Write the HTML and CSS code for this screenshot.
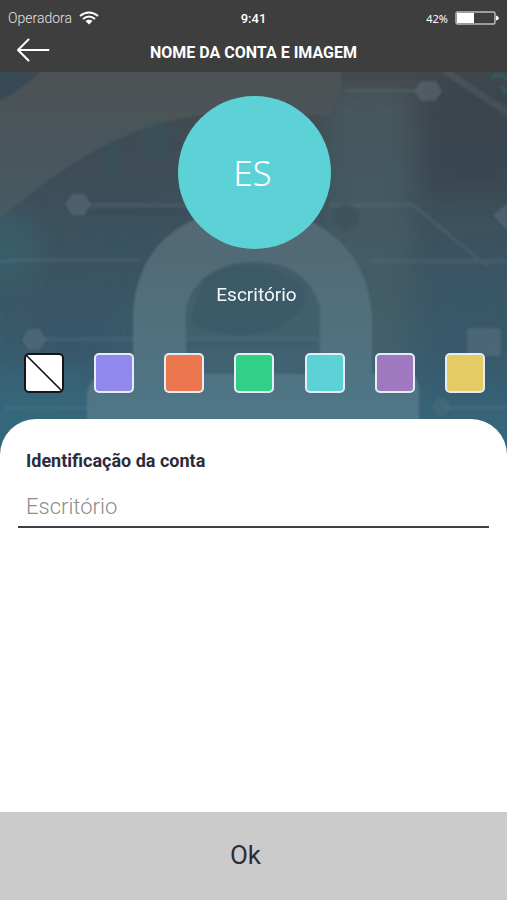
FILE: index.html
```html
<!DOCTYPE html>
<html lang="pt">
<head>
<meta charset="utf-8">
<meta name="viewport" content="width=device-width, initial-scale=1">
<title>Nome da conta e imagem</title>
<link rel="stylesheet" href="styles.css">
</head>
<body>
<form class="screen">
  <header class="top">
    <div class="status">
      <span class="carrier">Operadora
        <svg class="wifi" viewBox="0 0 20 14" aria-hidden="true">
          <path d="M1 5Q10-2 19 5M4 8Q10 3 16 8" fill="none" stroke="#fff" stroke-width="2"/>
          <path d="M6.500 10Q10 7.500 13.500 10L10 13.500Z" fill="#fff"/>
        </svg>
      </span>
      <span class="clock">9:41</span>
      <span class="battery">42%
        <svg class="cell" viewBox="0 0 44 14" aria-hidden="true">
          <rect x="1" y="1" width="39" height="12" rx="1.500" fill="none" stroke="#bdbdbd" stroke-width="1.400"/>
          <rect x="2" y="2" width="17" height="10" fill="#fff"/>
          <path d="M41 4.500Q44 5.500 44 7T41 9.500Z" fill="#fff"/>
        </svg>
      </span>
    </div>
    <div class="bar">
      <button class="back" type="button" aria-label="Voltar">
        <svg viewBox="0 0 34 24" aria-hidden="true"><path d="M32.500 12H2M12.500 1.500L2 12L12.500 22.500" fill="none" stroke="#fff" stroke-width="2" stroke-linecap="round" stroke-linejoin="round"/></svg>
      </button>
      <h1>NOME DA CONTA E IMAGEM</h1>
    </div>
  </header>

  <section class="hero">
    <svg class="art" viewBox="0 0 507 383" preserveAspectRatio="xMidYMin slice" aria-hidden="true">
      <defs>
        <linearGradient id="base" x1="0" y1="0" x2="0" y2="1">
          <stop offset="0" stop-color="#44484c"/>
          <stop offset=".25" stop-color="#3e4d57"/>
          <stop offset=".55" stop-color="#3b5664"/>
          <stop offset=".8" stop-color="#385f73"/>
          <stop offset="1" stop-color="#336b80"/>
        </linearGradient>
        <linearGradient id="ring" x1="0" y1="0" x2="0" y2="1">
          <stop offset="0" stop-color="#4e5154"/>
          <stop offset="1" stop-color="#455b63"/>
        </linearGradient>
        <linearGradient id="lock" x1="0" y1="0" x2="0" y2="1">
          <stop offset="0" stop-color="#526871"/>
          <stop offset="1" stop-color="#507a8d"/>
        </linearGradient>
        <filter id="soft" x="-50%" y="-50%" width="200%" height="200%"><feGaussianBlur stdDeviation="12"/></filter>
        <filter id="edge"><feGaussianBlur stdDeviation="1"/></filter>
      </defs>
      <rect width="507" height="390" fill="url(#base)"/>
      <g filter="url(#soft)">
        <ellipse cx="8" cy="175" rx="32" ry="36" fill="#366574" opacity=".5"/>
        <ellipse cx="2" cy="8" rx="26" ry="24" fill="#344c58"/>
        <rect x="325" y="15" width="86" height="330" fill="#4a6269" opacity=".5"/>
        <rect x="425" y="10" width="100" height="110" fill="#37424c" opacity=".7"/>
        <rect x="425" y="190" width="90" height="110" fill="#35556a" opacity=".5"/>
        <rect x="30" y="230" width="80" height="60" fill="#385368" opacity=".6"/>
        <rect x="80" y="150" width="70" height="40" fill="#355162" opacity=".6"/>
        <rect x="-10" y="300" width="100" height="70" fill="#307082" opacity=".35"/>
      </g>
      <g filter="url(#edge)">
        <path d="M45-4H341V22L331 43H240C206 39 173 47 137 59C76 84 37 116-4 150V31Q22 18 45-4Z" fill="url(#ring)"/>
        <path d="M108 67L115 64V101H108ZM142 52L167 46V84H142Z" fill="#335b60" opacity=".3"/>
        <g fill="none" stroke="#70838b" stroke-width="4" opacity=".2">
          <path d="M88 133H190M330 133H413L487 194M0 190L15 188H140M370 189H507M42 267H133M187 267H320M5 336H86M445 336H507M345 19H415"/>
          <path d="M445-1L510 42" stroke-width="7"/>
        </g>
        <path d="M85 140H185M186 272H315" stroke="#304a58" stroke-width="5" opacity=".4"/>
        <circle cx="346" cy="145" r="13" fill="#3a4e59" opacity=".6"/>
        <g fill="#667c87" opacity=".4">
          <path d="M72 122H84L91 132L84 143H72L65 132ZM421 9H436L442 19L436 29H421L414 19ZM28 257H40L46 268L40 278H28L22 268Z"/>
          <path d="M507 132L493 143L507 158Z"/>
          <rect x="467" y="256" width="34" height="28" rx="3"/>
          <circle cx="441" cy="335" r="9" opacity=".6"/>
        </g>
        <path d="M491 6Q500 0 507 7M503 14Q500 17 508 20" fill="none" stroke="#2d6670" stroke-width="4" opacity=".6"/>
        <path d="M133 302V243C137 168 189 137 253 137C319 137 368 178 372 243V302H412Q419 306 419 320V390H87V326Q87 309 101 302ZM186 302H320V235C309 199 282 190 253 190C220 190 191 207 186 238Z" fill="url(#lock)" fill-rule="evenodd"/>
        <path d="M186 302V238C191 207 220 190 253 190C282 190 309 199 320 235V302Z" fill="#4a6873" opacity=".45"/>
        <path d="M203 207Q250 175 303 215Q310 238 285 252Q240 276 190 250Z" fill="#395462" opacity=".4"/>
      </g>
    </svg>
    <div class="avatar">ES</div>
    <p class="name">Escritório</p>
    <div class="swatches" role="radiogroup" aria-label="Cor">
      <input class="swatch none" type="radio" name="color" aria-label="Sem cor">
      <input class="swatch lilac" type="radio" name="color" aria-label="Lilás">
      <input class="swatch orange" type="radio" name="color" aria-label="Laranja">
      <input class="swatch green" type="radio" name="color" aria-label="Verde">
      <input class="swatch cyan" type="radio" name="color" aria-label="Ciano" checked>
      <input class="swatch purple" type="radio" name="color" aria-label="Roxo">
      <input class="swatch yellow" type="radio" name="color" aria-label="Amarelo">
    </div>
  </section>

  <main class="sheet">
    <label for="account">Identificação da conta</label>
    <input id="account" class="field" type="text" placeholder="Escritório">
  </main>
  <button class="ok" type="submit">Ok</button>
</form>
</body>
</html>
```

FILE: styles.css
```css
* {
  box-sizing: border-box;
}

body {
  margin: 0;
  font-family: Roboto, "Liberation Sans", sans-serif;
  background: #fff;
}

.screen {
  display: flex;
  flex-direction: column;
  min-height: 100vh;
}

.top {
  background: #3e3e3e;
  color: #fff;
}

.status {
  display: grid;
  grid-template-columns: 1fr auto 1fr;
  align-items: center;
  height: 36px;
  padding: 0 8px;
}

.carrier,
.battery {
  display: flex;
  align-items: center;
  gap: 7px;
}

.carrier {
  color: #e4e4e4;
  font-size: 14px;
  font-weight: 300;
}

.wifi {
  width: 20px;
  height: 14px;
}

.clock {
  font-size: 13px;
  font-weight: 500;
}

.battery {
  justify-content: flex-end;
  font-family: "Noto Sans", sans-serif;
  font-size: 11px;
}

.cell {
  width: 44px;
  height: 14px;
}

.bar {
  display: grid;
  grid-template-columns: 50px 1fr 50px;
  align-items: center;
  height: 36px;
  padding-bottom: 2px;
}

.back {
  display: flex;
  justify-content: flex-end;
  padding: 0 0 6px;
  border: 0;
  background: none;
}

.back svg {
  width: 34px;
  height: 24px;
}

h1 {
  margin: 0;
  font-size: 16px;
  font-weight: 700;
  line-height: 20px;
  text-align: center;
}

.hero {
  position: relative;
  display: flex;
  flex-direction: column;
  align-items: center;
  padding: 24px 22px 62px 24px;
  overflow: hidden;
}

.art {
  position: absolute;
  inset: 0;
  width: 100%;
  height: 100%;
}

.avatar,
.name,
.swatches {
  position: relative;
}

.avatar {
  display: grid;
  place-items: center;
  width: 153px;
  height: 153px;
  padding-right: 4px;
  border-radius: 50%;
  background: #5dd2d6;
  color: #fff;
  font-family: "Noto Sans", sans-serif;
  font-size: 35px;
  font-weight: 300;
}

.name {
  margin: 34px 0 46px;
  padding-left: 4px;
  color: #f4f8fa;
  font-size: 19px;
  line-height: 24px;
}

.swatches {
  display: flex;
  justify-content: space-between;
  width: 100%;
}

.swatch {
  appearance: none;
  width: 40px;
  height: 40px;
  margin: 0;
  border: 2px solid #e4edf5;
  border-radius: 5px;
}

.none {
  border-color: #151515;
  background: linear-gradient(45deg, #fff 48%, #151515 49%, #151515 51%, #fff 52%);
}

.lilac { background: #9188ee; }
.orange { background: #ec774f; }
.green { background: #32d087; }
.cyan { background: #5dd2d6; }
.purple { background: #a078c0; }
.yellow { background: #e4cb64; }

.sheet {
  position: relative;
  display: flex;
  flex: 1;
  flex-direction: column;
  margin-top: -36px;
  padding: 30px 18px;
  border-radius: 36px 36px 0 0;
  background: #fff;
}

label {
  padding-left: 8px;
  color: #2b2c3a;
  font-size: 18px;
  font-weight: 700;
  line-height: 24px;
}

.field {
  width: 100%;
  height: 42px;
  margin-top: 13px;
  padding: 0 8px;
  border: 0;
  border-bottom: 2px solid #40404a;
  border-radius: 0;
  outline: 0;
  background: none;
  color: #2b2c3a;
  font: 300 22px Roboto, sans-serif;
}

.field::placeholder {
  color: #8c8c8c;
  opacity: 1;
}

.ok {
  height: 88px;
  padding: 0 16px 2px 0;
  border: 0;
  background: #cbcbcb;
  color: #2b2c3a;
  font: 400 26px Roboto, sans-serif;
}
```
